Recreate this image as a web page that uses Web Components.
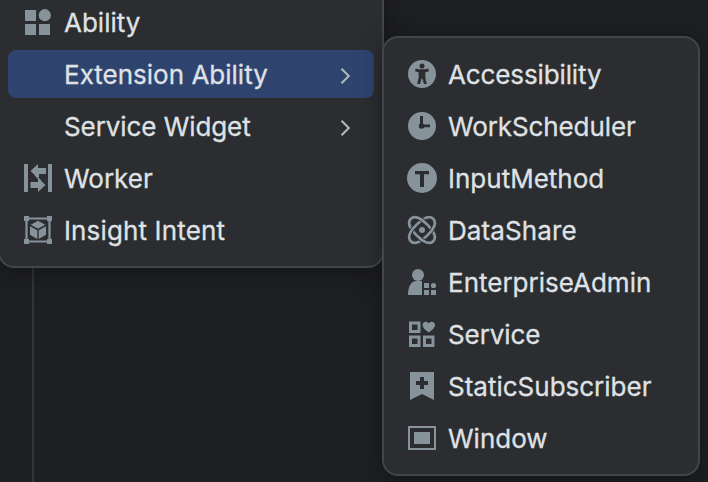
<!DOCTYPE html>
<html lang="en">
<head>
<meta charset="utf-8">
<title>New menu</title>
<style>
html,body{margin:0;height:100%;overflow:hidden;background:#1e1f22}
</style>
</head>
<body>
<menu-desktop>
  <popup-menu slot="main" class="main">
    <menu-entry icon="ability">Ability</menu-entry>
    <menu-entry selected submenu>Extension Ability</menu-entry>
    <menu-entry submenu style="letter-spacing:-.08px">Service Widget</menu-entry>
    <menu-entry icon="worker">Worker</menu-entry>
    <menu-entry icon="insight" style="letter-spacing:.14px">Insight Intent</menu-entry>
  </popup-menu>
  <popup-menu slot="sub" class="sub">
    <menu-entry icon="accessibility" style="letter-spacing:-.12px">Accessibility</menu-entry>
    <menu-entry icon="clock" style="letter-spacing:-.1px">WorkScheduler</menu-entry>
    <menu-entry icon="input">InputMethod</menu-entry>
    <menu-entry icon="share" style="letter-spacing:.1px">DataShare</menu-entry>
    <menu-entry icon="admin">EnterpriseAdmin</menu-entry>
    <menu-entry icon="service" style="letter-spacing:-.1px">Service</menu-entry>
    <menu-entry icon="subscriber">StaticSubscriber</menu-entry>
    <menu-entry icon="window">Window</menu-entry>
  </popup-menu>
</menu-desktop>
<script>
const orbit = 'M0-7.600C7-7.600 15.800-6.200 15.800 0S7 7.600 0 7.600-15.800 6.200-15.800 0-7-7.600 0-7.600z';
const icons = {
  ability: '<path d="M3 4h11v11H3zM3 18h11v11H3zM17 18h11v11H17z"/><circle cx="22.8" cy="9.2" r="6.1"/>',
  worker: '<path d="M2 2h4v28H2zM26 2h4v28h-4zM8.5 9 16 2v4h8v6h-7v3l-1 1zM8.5 20h7.5v-4l7.5 7-7.5 7v-4H8.5z"/><path d="M13 13l6 6" stroke="currentColor" stroke-width="1.2"/>',
  insight: '<path d="M2 2h5v5H2zM25 2h5v5h-5zM2 25h5v5H2zM25 25h5v5h-5z"/><path d="M4.5 4.5h23v23h-23z" fill="none" stroke="currentColor" stroke-width="2.200"/><path d="M16 6.7l7.2 4L16 14.7l-7.2-4zM8 12.2l7.3 4.1v8.6L8 20.8zM24 12.2l-7.3 4.1v8.6l7.3-4.1z"/>',
  accessibility: '<circle cx="16" cy="16" r="14"/><g fill="var(--panel)"><circle cx="16" cy="7.9" r="2.5"/><path d="M9.7 10.5 13 11.3h6l3.3-.8.7 2.7-3.6 1V20l1.4 6h-2.9L16.5 20.8h-1L14.1 26h-2.9l1.4-6v-5.8L9 13.2z"/></g>',
  clock: '<circle cx="16" cy="16" r="14"/><g fill="var(--panel)"><path d="M14 6h3v10h-3zM16 14.4h8v2.9h-8z"/><circle cx="15.6" cy="16" r="2.8"/></g>',
  input: '<circle cx="16" cy="16" r="15"/><path d="M9 9h14v3.2h-5V25h-4V12.2H9z" fill="var(--panel)"/>',
  share: `<clipPath id="over"><path d="M12 4h8v9h-8zM12 19h8v9h-8z"/></clipPath>
    <g fill="none" stroke="currentColor" stroke-width="2.700">
    <path d="${orbit}" transform="translate(16 16) rotate(45)"/>
    <path d="${orbit}" transform="translate(16 16) rotate(-45)" stroke="var(--panel)" stroke-width="4.400"/>
    <path d="${orbit}" transform="translate(16 16) rotate(-45)"/>
    <g clip-path="url(#over)"><path d="${orbit}" transform="translate(16 16) rotate(45)" stroke="var(--panel)" stroke-width="4.400"/>
    <path d="${orbit}" transform="translate(16 16) rotate(45)"/></g></g><circle cx="16" cy="16" r="3"/>`,
  admin: '<circle cx="12" cy="9" r="6"/><path d="M2 29C2 21 5 15 10.5 15H16v14zM18 17h5v5h-5zM18 24h5v5h-5zM25 24h5v5h-5z"/><circle cx="27.5" cy="19.5" r="2.6"/>',
  service: '<path d="M4.5 5h8.500v8.500H4.500zM4.500 19H13v8.500H4.500zM18.500 19H27v8.500h-8.500z" fill="none" stroke="currentColor" stroke-width="3"/><path d="M22.800 14.500C19 11.600 16.500 9.600 16.500 7c0-3.500 4.300-4.600 6.300-1.700C24.800 2.400 29.100 3.500 29.100 7c0 2.600-2.500 4.600-6.300 7.500z"/>',
  subscriber: '<path d="M4 2h24v28l-12-6-12 6z"/><path d="M14 7h4v4h4v4h-4v4h-4v-4h-4v-4h4z" fill="var(--panel)"/>',
  window: '<path d="M3 5h26v22H3z" fill="none" stroke="currentColor" stroke-width="2"/><path d="M8 10h16v12H8z"/>'
};

class MenuIcon extends HTMLElement {
  connectedCallback() {
    this.attachShadow({mode:'open'}).innerHTML = `<style>
      :host{display:block;width:32px;height:32px;flex:none;color:#87939a}
      svg{display:block;fill:currentColor}
    </style><svg width="32" height="32" viewBox="0 0 32 32">${icons[this.getAttribute('name')] || ''}</svg>`;
  }
}

class MenuEntry extends HTMLElement {
  connectedCallback() {
    this.attachShadow({mode:'open'}).innerHTML = `<style>
      :host{display:flex;align-items:center;height:48px;border-radius:8px;padding:0 20px 0 14px;box-sizing:border-box;gap:10px;white-space:nowrap}
      :host([selected]){background:#2e436e}
      .label{flex:1;padding-top:2px;-webkit-text-stroke:.3px currentColor}
      .arrow{display:block;fill:none;stroke:#b4b8bf;stroke-width:2}
    </style><menu-icon name="${this.getAttribute('icon') || ''}"></menu-icon><span class="label"><slot></slot></span>
    ${this.hasAttribute('submenu') ? '<svg class="arrow" width="16" height="24" viewBox="0 0 16 24"><path d="M3.500 6.800l7.300 7.200-7.300 7.200"/></svg>' : ''}`;
  }
}

class PopupMenu extends HTMLElement {
  connectedCallback() {
    this.attachShadow({mode:'open'}).innerHTML = `<style>
      :host{--panel:#2b2d30;display:flex;flex-direction:column;gap:4px;box-sizing:border-box;background:var(--panel);border:2px solid #43454a;border-radius:16px;padding:12px 8px;box-shadow:0 4px 24px rgba(0,0,0,.35)}
    </style><slot></slot>`;
  }
}

class MenuDesktop extends HTMLElement {
  connectedCallback() {
    this.attachShadow({mode:'open'}).innerHTML = `<style>
      :host{display:block;position:relative;width:708px;height:482px;overflow:hidden;background:#1e1f22;color:#dfe1e5;font:26px/32px Inter,"Liberation Sans",sans-serif}
      .divider{position:absolute;left:32px;top:0;width:2px;height:100%;background:#323438}
      ::slotted(.main){position:absolute;left:-2px;width:386px;bottom:214px;height:300px;justify-content:flex-end}
      ::slotted(.sub){position:absolute;left:382px;top:36px;width:318px;height:440px}
    </style><div class="divider"></div><slot name="main"></slot><slot name="sub"></slot>`;
  }
}

customElements.define('menu-icon', MenuIcon);
customElements.define('menu-entry', MenuEntry);
customElements.define('popup-menu', PopupMenu);
customElements.define('menu-desktop', MenuDesktop);
</script>
</body>
</html>
